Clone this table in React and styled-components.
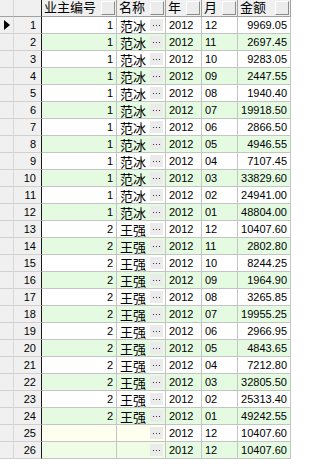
import React from 'react';
import styled, { createGlobalStyle } from 'styled-components';

const GlobalStyle = createGlobalStyle`
    html, body {
        margin: 0;
        padding: 0;
        background: #ffffff;
    }
    body {
        font-family: 'Liberation Sans', 'Noto Sans CJK SC', sans-serif;
        font-size: 11px;
        color: #000000;
    }
`;

const COLS = '14px 28px 75px 49px 36px 36px 53px';

const Grid = styled.div`
    display: grid;
    grid-template-columns: ${COLS};
    grid-auto-rows: 17px;
    width: 291px;
`;

const Cell = styled.div`
    box-sizing: border-box;
    display: flex;
    align-items: center;
    justify-content: ${props => props.align === 'right' ? 'flex-end' : 'flex-start'};
    padding: ${props => props.align === 'right' ? '0 3px 0 0' : '0 0 0 3px'};
    border-right: 1px solid #c4c4c4;
    border-bottom: 1px solid #c4c4c4;
    background: ${props => props.bg};
    white-space: nowrap;
    overflow: hidden;
`;

const Fixed = styled(Cell)`
    background: #f0f0f0;
    border-right: ${props => props.dark ? '1px solid #1a1a1a' : '1px solid #d8d8d8'};
    border-bottom: 1px solid #d0d0d0;
    padding: ${props => props.dark ? '0 5px 0 0' : '0'};
    justify-content: ${props => props.dark ? 'flex-end' : 'flex-start'};
`;

const HeadCell = styled.div`
    box-sizing: border-box;
    display: flex;
    align-items: center;
    background: #f0f0f0;
    border-right: 1px solid #a0a0a0;
    border-bottom: 1px solid #a0a0a0;
    padding-left: 2px;
    white-space: nowrap;
    overflow: hidden;
`;

const HeadCorner = styled(HeadCell)`
    border-right: ${props => props.dark ? '1px solid #1a1a1a' : '1px solid #d8d8d8'};
    border-bottom: 1px solid #a0a0a0;
`;

const HeadLabel = styled.span`
    flex: 1;
    font-size: 13px;
    line-height: 16px;
`;

const HeadButton = styled.span`
    box-sizing: border-box;
    width: 14px;
    height: 14px;
    margin-right: 1px;
    background: #ececec;
    border-top: 1px solid #ffffff;
    border-left: 1px solid #ffffff;
    border-right: 1px solid #8c8c8c;
    border-bottom: 1px solid #8c8c8c;
`;

const Cjk = styled.span`
    font-size: 13px;
    flex: 1;
`;

const Dots = styled.span`
    display: flex;
    align-items: center;
    justify-content: center;
    gap: 2px;
    width: 13px;
    height: 12px;
    margin-right: 2px;
    background: #ebebeb;
`;

const Dot = styled.i`
    width: 1px;
    height: 1px;
    background: #303030;
`;

const Pointer = styled.span`
    width: 0;
    height: 0;
    margin-left: 4px;
    border-top: 5px solid transparent;
    border-bottom: 5px solid transparent;
    border-left: 6px solid #000000;
`;

const amounts1 = ['9969.05', '2697.45', '9283.05', '2447.55', '1940.40', '19918.50', '2866.50', '4946.55', '7107.45', '33829.60', '24941.00', '48804.00'];
const amounts2 = ['10407.60', '2802.80', '8244.25', '1964.90', '3265.85', '19955.25', '2966.95', '4843.65', '7212.80', '32805.50', '25313.40', '49242.55'];
const months = ['12', '11', '10', '09', '08', '07', '06', '05', '04', '03', '02', '01'];

const rows = [
    ...amounts1.map((a, i) => ({ owner: '1', name: '范冰', year: '2012', month: months[i], amount: a })),
    ...amounts2.map((a, i) => ({ owner: '2', name: '王强', year: '2012', month: months[i], amount: a })),
    { owner: '', name: '', year: '2012', month: '12', amount: '10407.60', blank: 'new' },
    { owner: '', name: '', year: '2012', month: '12', amount: '10407.60', blank: 'last' },
];

const WHITE = '#ffffff';
const GREEN = '#e4fbe2';

export default function App() {
    const headers = ['业主编号', '名称', '年', '月', '金额'];

    return (
        <>
            <GlobalStyle />
            <Grid>
                <HeadCorner />
                <HeadCorner dark />
                {headers.map(h => (
                    <HeadCell key={h}>
                        <HeadLabel>{h}</HeadLabel>
                        <HeadButton />
                    </HeadCell>
                ))}

                {rows.map((r, i) => {
                    const bg = i % 2 === 1 ? GREEN : WHITE;
                    let keyBg = bg;
                    if (r.blank === 'new') keyBg = '#fffff0';
                    if (r.blank === 'last') keyBg = '#f0fde6';
                    return (
                        <React.Fragment key={i}>
                            <Fixed>{i === 0 && <Pointer />}</Fixed>
                            <Fixed dark>{i + 1}</Fixed>
                            <Cell bg={keyBg} align="right">{r.owner}</Cell>
                            <Cell bg={keyBg}>
                                <Cjk>{r.name}</Cjk>
                                <Dots><Dot /><Dot /><Dot /></Dots>
                            </Cell>
                            <Cell bg={bg}>{r.year}</Cell>
                            <Cell bg={bg}>{r.month}</Cell>
                            <Cell bg={bg} align="right">{r.amount}</Cell>
                        </React.Fragment>
                    );
                })}
            </Grid>
        </>
    );
}
